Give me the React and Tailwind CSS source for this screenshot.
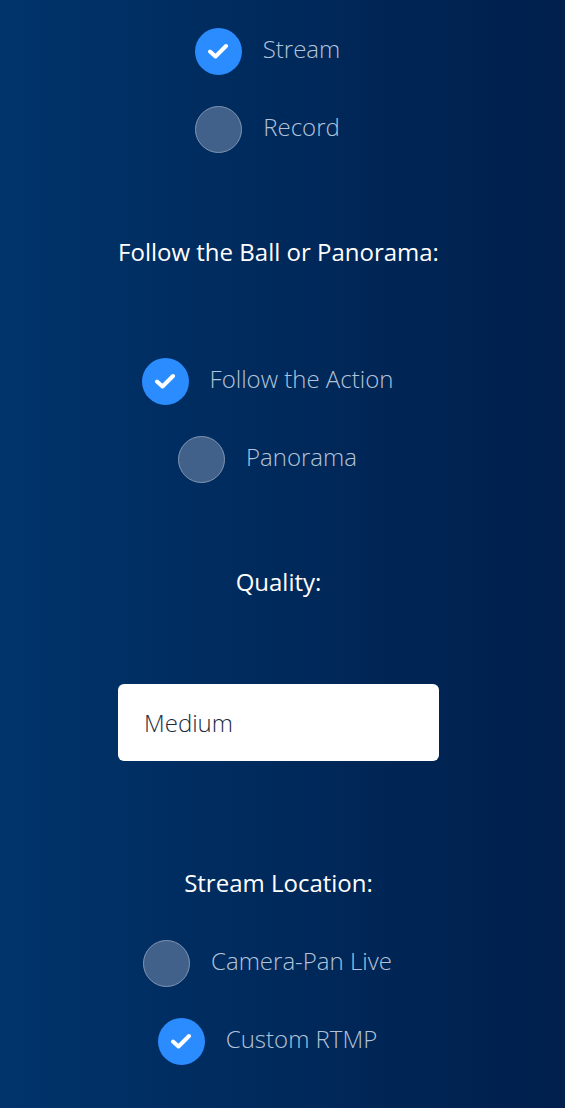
import { useState } from 'react'

function Radio({ label, checked, onClick }) {
  return (
    <button
      type="button"
      onClick={onClick}
      className="flex h-[46px] items-center gap-[21px] pr-[30px]"
    >
      {checked ? (
        <span className="flex h-[47px] w-[47px] items-center justify-center rounded-full bg-[#2a8cff]">
          <svg width="22" height="16" viewBox="0 0 22 16" fill="none">
            <path
              d="M3 8.5 L8.5 13.5 L19 3"
              stroke="white"
              strokeWidth="4"
              strokeLinecap="round"
              strokeLinejoin="round"
            />
          </svg>
        </span>
      ) : (
        <span className="h-[47px] w-[47px] rounded-full border border-[#8095b2] bg-[#41618a]" />
      )}
      <span className="pb-[5px] text-[24px] leading-[32px] font-light text-[#b3c3d9]">{label}</span>
    </button>
  )
}

function Heading({ children }) {
  return (
    <h2 className="pr-[8px] text-center text-[24px] leading-[30px] text-white">
      {children}
    </h2>
  )
}

export default function App() {
  const [mode, setMode] = useState('stream')
  const [view, setView] = useState('follow')
  const [location, setLocation] = useState('custom')

  return (
    <div
      className="flex min-h-screen flex-col items-center bg-gradient-to-r from-[#00346b] to-[#001f4c] pt-[28px] pb-[44px]"
      style={{ fontFamily: '"Open Sans", "Noto Sans", sans-serif' }}
    >
      <div className="flex flex-col items-center gap-[32px]">
        <Radio label="Stream" checked={mode === 'stream'} onClick={() => setMode('stream')} />
        <Radio label="Record" checked={mode === 'record'} onClick={() => setMode('record')} />
      </div>

      <div className="mt-[85px] w-full">
        <Heading>Follow the Ball or Panorama:</Heading>
      </div>

      <div className="mt-[91px] flex flex-col items-center gap-[32px]">
        <Radio label="Follow the Action" checked={view === 'follow'} onClick={() => setView('follow')} />
        <Radio label="Panorama" checked={view === 'panorama'} onClick={() => setView('panorama')} />
      </div>

      <div className="mt-[85px] w-full">
        <Heading>Quality:</Heading>
      </div>

      <div className="mt-[87px] pr-[8px]">
        <div className="flex h-[77px] w-[321px] items-center rounded-[6px] bg-white px-[26px]">
          <span className="text-[24px] font-light text-[#1c2a3d]">Medium</span>
        </div>
      </div>

      <div className="mt-[107px] w-full">
        <Heading>Stream Location:</Heading>
      </div>

      <div className="mt-[42px] flex flex-col items-center gap-[32px]">
        <Radio label="Camera-Pan Live" checked={location === 'camera'} onClick={() => setLocation('camera')} />
        <Radio label="Custom RTMP" checked={location === 'custom'} onClick={() => setLocation('custom')} />
      </div>
    </div>
  )
}
